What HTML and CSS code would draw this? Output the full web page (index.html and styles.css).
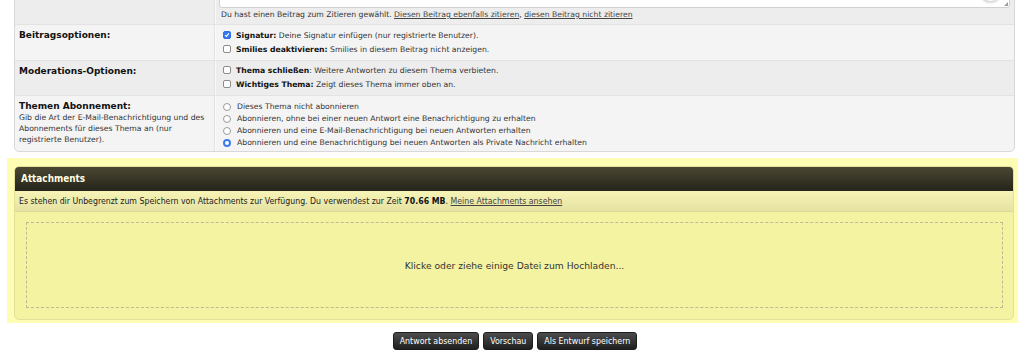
FILE: index.html
```html
<!DOCTYPE html>
<html lang="de">
<head>
	<meta charset="utf-8">
	<title>Antwort erstellen</title>
	<link rel="stylesheet" href="styles.css">
</head>
<body>

	<div class="page">

		<div class="form-table">
			<div class="row row-quote">
				<div class="label"></div>
				<div class="field">
					<div class="editor">
						<span class="editor-btn"></span>
						<span class="grip"></span>
					</div>
					<p class="note">Du hast einen Beitrag zum Zitieren gewählt. <a href="#">Diesen Beitrag ebenfalls zitieren</a>, <a href="#">diesen Beitrag nicht zitieren</a></p>
				</div>
			</div>

			<div class="row">
				<div class="label">
					<h3>Beitragsoptionen:</h3>
				</div>
				<div class="field options">
					<label class="opt"><span class="box checked"><svg viewBox="0 0 8 8"><path d="M1.5 4.1 L3.3 5.9 L6.6 1.9"/></svg></span><b>Signatur:</b> Deine Signatur einfügen (nur registrierte Benutzer).</label>
					<label class="opt"><span class="box"></span><b>Smilies deaktivieren:</b> Smilies in diesem Beitrag nicht anzeigen.</label>
				</div>
			</div>

			<div class="row row-dark">
				<div class="label">
					<h3>Moderations-Optionen:</h3>
				</div>
				<div class="field options options-mod">
					<label class="opt"><span class="box"></span><b>Thema schließen</b>: Weitere Antworten zu diesem Thema verbieten.</label>
					<label class="opt"><span class="box"></span><b>Wichtiges Thema:</b> Zeigt dieses Thema immer oben an.</label>
				</div>
			</div>

			<div class="row row-last">
				<div class="label">
					<h3>Themen Abonnement:</h3>
					<p class="desc">Gib die Art der E-Mail-Benachrichtigung und des Abonnements für dieses Thema an (nur registrierte Benutzer).</p>
				</div>
				<div class="field radios">
					<label class="rad"><span class="dot"></span>Dieses Thema nicht abonnieren</label>
					<label class="rad"><span class="dot"></span>Abonnieren, ohne bei einer neuen Antwort eine Benachrichtigung zu erhalten</label>
					<label class="rad"><span class="dot"></span>Abonnieren und eine E-Mail-Benachrichtigung bei neuen Antworten erhalten</label>
					<label class="rad"><span class="dot on"></span>Abonnieren und eine Benachrichtigung bei neuen Antworten als Private Nachricht erhalten</label>
				</div>
			</div>
		</div>

		<div class="attach-wrap">
			<div class="attach">
				<div class="attach-head">Attachments</div>
				<div class="attach-info">
					Es stehen dir Unbegrenzt zum Speichern von Attachments zur Verfügung. Du verwendest zur Zeit <b>70.66 MB</b>. <a href="#">Meine Attachments ansehen</a>
				</div>
				<div class="attach-body">
					<div class="dropzone">Klicke oder ziehe einige Datei zum Hochladen...</div>
				</div>
			</div>
		</div>

		<div class="buttons">
			<button class="btn">Antwort absenden</button>
			<button class="btn">Vorschau</button>
			<button class="btn">Als Entwurf speichern</button>
		</div>

	</div>

</body>
</html>
```

FILE: styles.css
```css
* {
	box-sizing: border-box;
	padding: 0;
	margin: 0;
}

body {
	background-color: #FFF;
	font-family: "DejaVu Sans", Verdana, sans-serif;
	font-size: 7.7px;
	color: #333;
	overflow: hidden;
}

a {
	color: #444;
}

.page {
	margin: -50px 6px 0 7px;
}

/* form table */

.form-table {
	margin: 0 3px 0 7px;
	border: 1px solid #D8D8D8;
	border-radius: 0 0 5px 5px;
	background-color: #F4F4F4;
	overflow: hidden;
}

.row {
	display: grid;
	grid-template-columns: 200px 1fr;
	border-top: 1px solid #E3E3E3;
}
.row:first-child {
	border-top: 0;
}
.row-quote,
.row-dark {
	background-color: #EDEDED;
}

.label {
	padding: 4px 5px 4px 4px;
	border-right: 1px solid #E2E2E2;
	box-shadow: 1px 0 0 #FAFAFA;
}

.label h3 {
	font-size: 9px;
	font-weight: bold;
	line-height: 12px;
	color: #111;
}

.label .desc {
	line-height: 11px;
	color: #333;
}

.row-last .label {
	padding-bottom: 6px;
}

.field {
	padding: 4px 4px 3px 5px;
}

.editor {
	position: relative;
	height: 53px;
	margin-left: -1px;
	border: 1px solid #D0D0D0;
	border-radius: 3px;
	background-color: #FFF;
}

.editor-btn {
	position: absolute;
	right: 7px;
	bottom: 5px;
	width: 23px;
	height: 23px;
	border: 1px solid #D6D6D6;
	border-radius: 50%;
	background-color: #FFF;
	box-shadow: 0 1px 2px rgba(0, 0, 0, .15);
}

.grip {
	position: absolute;
	right: 1px;
	bottom: 1px;
	width: 0;
	height: 0;
	border-left: 4px solid transparent;
	border-bottom: 4px solid #9A9A9A;
}

.note {
	line-height: 13px;
	padding-left: 1px;
}

.options {
	padding: 4px 4px 4px 8px;
}
.options-mod {
	padding-top: 3px;
}

.opt {
	display: block;
	height: 13.5px;
	line-height: 13.5px;
	white-space: nowrap;
}

.opt b {
	color: #111;
}

.box {
	display: inline-block;
	width: 8px;
	height: 8px;
	margin-right: 5px;
	border: 1px solid #8C8C8C;
	border-radius: 2px;
	background-color: #FFF;
	vertical-align: -1px;
}
.box.checked {
	border-color: #2E6FE3;
	background-color: #3478F0;
}
.box svg {
	display: block;
	width: 100%;
	height: 100%;
	fill: none;
	stroke: #FFF;
	stroke-width: 1.5;
}

.radios {
	padding: 5px 4px 2px 8px;
}

.rad {
	display: block;
	height: 12px;
	line-height: 12px;
	white-space: nowrap;
}

.dot {
	display: inline-block;
	width: 8px;
	height: 8px;
	margin-right: 6px;
	border: 1px solid #9A9A9A;
	border-radius: 50%;
	background-color: #FFF;
	vertical-align: -2px;
}
.dot.on {
	border: 2.5px solid #3A7BF2;
}

/* attachments */

.attach-wrap {
	margin-top: 6px;
	padding: 8px 4px 3px 7px;
	background-color: #FDFDB3;
}

.attach {
	border: 1px solid #E4E09A;
	border-radius: 5px;
	background-color: #F3F3A2;
	overflow: hidden;
}

.attach-head {
	height: 24px;
	padding-left: 6px;
	background: linear-gradient(#4A4833, #25241A);
	font-family: "DejaVu Sans Condensed", "Liberation Sans", sans-serif;
	font-stretch: condensed;
	font-size: 9.9px;
	font-weight: bold;
	line-height: 24px;
	color: #FFFDE3;
}

.attach-info {
	height: 21px;
	padding-left: 4px;
	border-bottom: 1px solid #DDD99A;
	background: linear-gradient(#F6F4B6, #E6E2A2);
	font-family: "DejaVu Sans Condensed", "Liberation Sans", sans-serif;
	font-stretch: condensed;
	font-size: 8.7px;
	line-height: 21px;
	color: #222;
}

.attach-info b {
	color: #111;
}

.attach-body {
	padding: 10px 10px 11px 11px;
}

.dropzone {
	display: flex;
	justify-content: center;
	align-items: center;
	height: 86px;
	border: 1px dashed #BDBA92;
	font-size: 9.2px;
	color: #333;
}

/* buttons */

.buttons {
	display: flex;
	justify-content: center;
	gap: 4px;
	margin-top: 9px;
	padding-left: 5px;
}

.btn {
	height: 18px;
	padding: 0 6px;
	border: 1px solid #1C1C1C;
	border-radius: 3px;
	background: linear-gradient(#4C4C4C, #1F1F1F);
	font-family: "DejaVu Sans Condensed", "Liberation Sans", sans-serif;
	font-stretch: condensed;
	font-size: 8.8px;
	color: #FFF;
}
```
